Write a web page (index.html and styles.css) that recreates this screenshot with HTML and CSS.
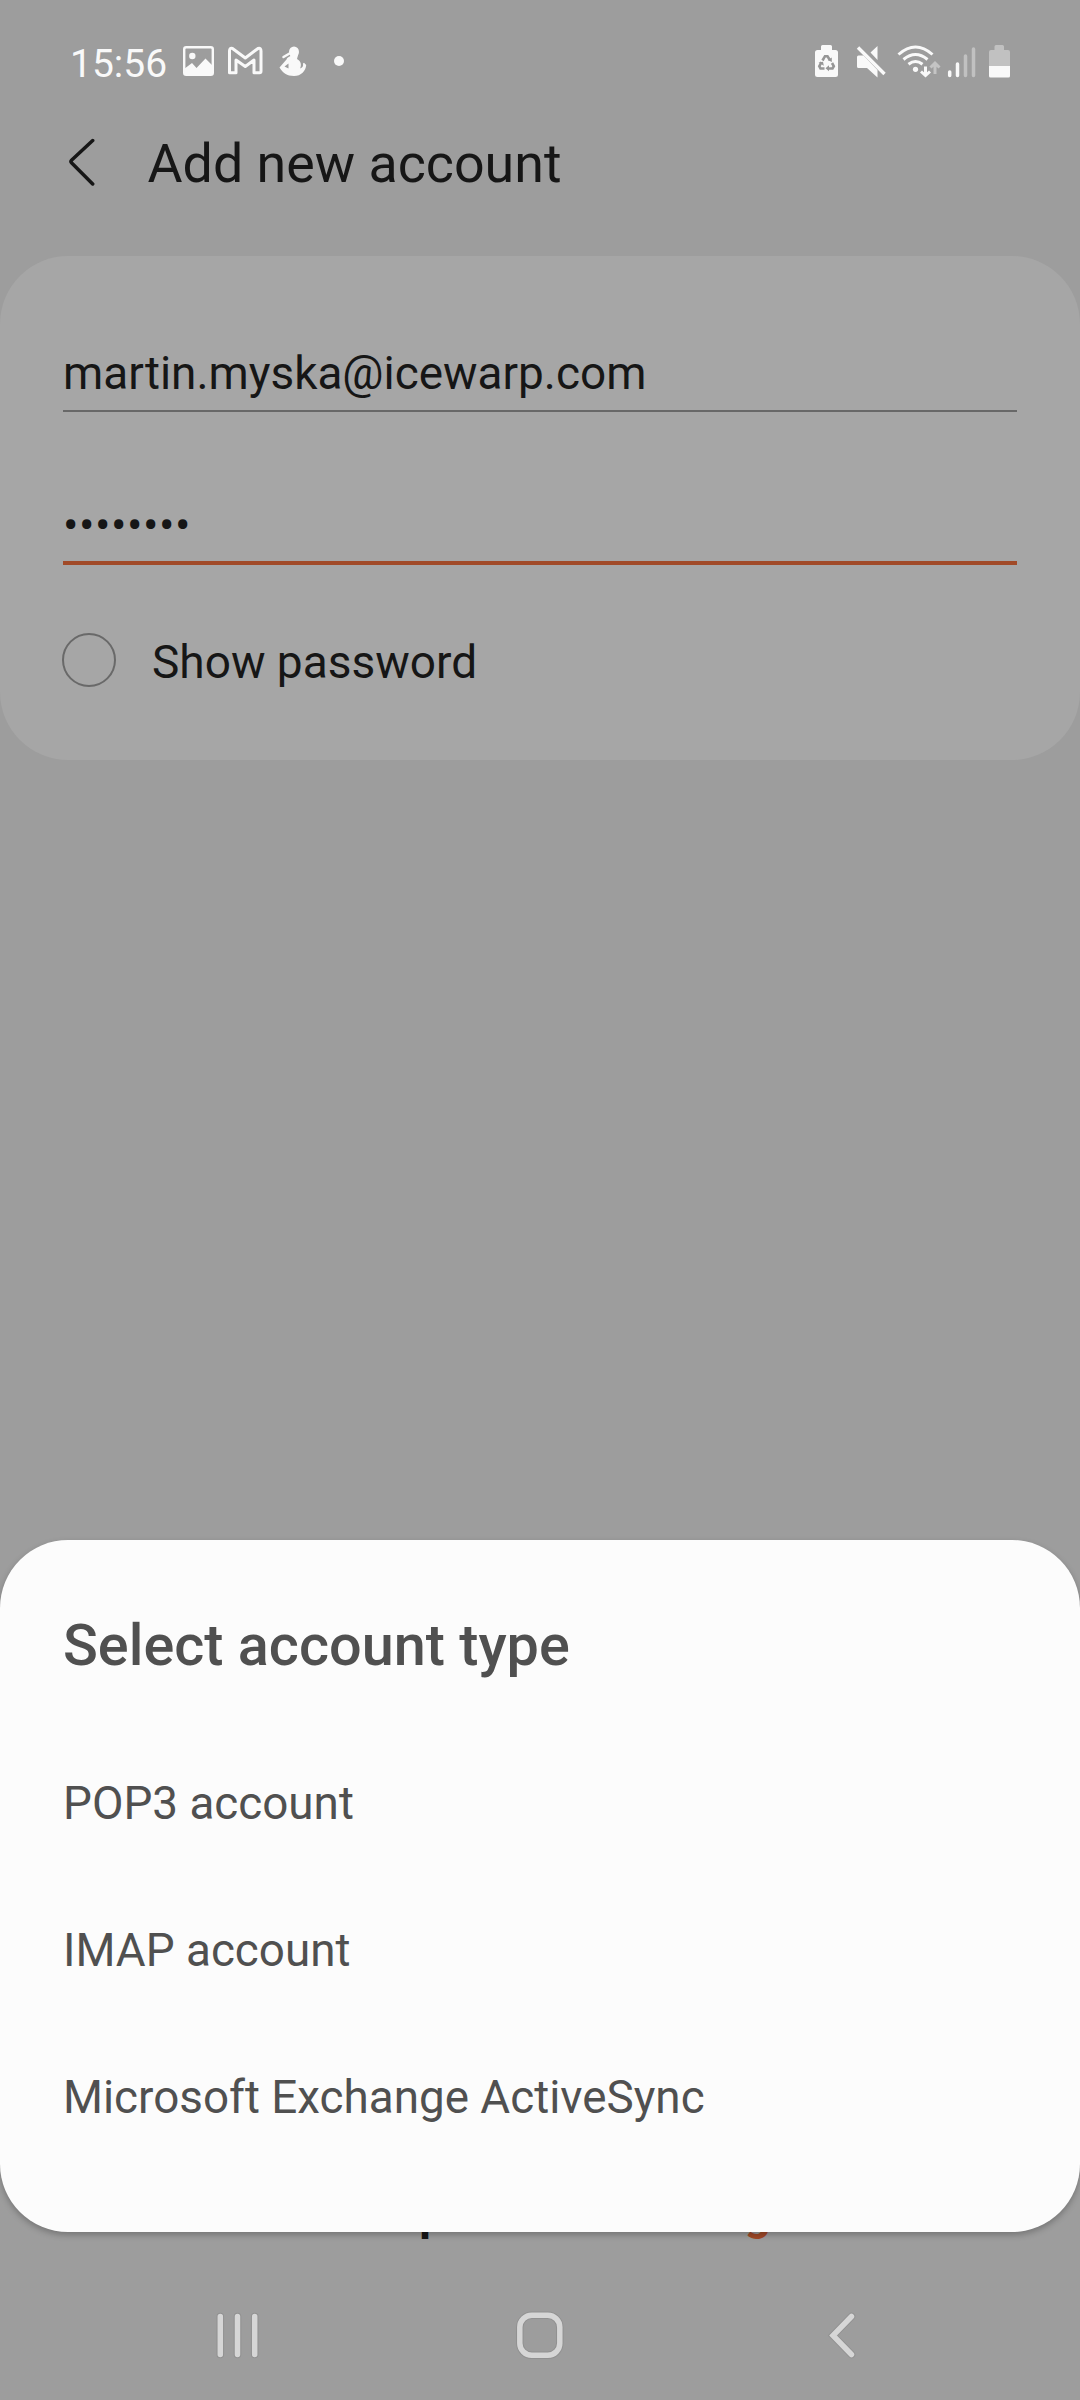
FILE: index.html
```html
<!DOCTYPE html>
<html lang="en">
<head>
<meta charset="utf-8">
<title>Add new account</title>
<link rel="stylesheet" href="styles.css">
</head>
<body>
<div class="screen">
  <div class="status">
    <div class="status-group">
      <span class="clock">15:56</span>
      <svg width="38" height="44" viewBox="183 41 38 44"><rect x="184.200" y="47.200" width="28.600" height="27.600" rx="2" fill="none" stroke="#f9f9f9" stroke-width="2.400"/><circle cx="192.300" cy="56" r="3.200" fill="#f9f9f9"/><path d="M184 69l8-6 4.500 5 9-9.500 7.500 7.500v9h-29z" fill="#f9f9f9"/></svg>
      <svg width="49" height="44" viewBox="221 41 49 44"><path d="M229.500 72.700V51q0-3.500 3-2.500l12.800 9.500L258 48.500q3-1 3 2.500v20.200q0 1.500-1.500 1.500H254V60l-8.700 6.500L236 60v12.700z" fill="none" stroke="#f9f9f9" stroke-width="3" stroke-linejoin="round"/></svg>
      <svg width="50" height="44" viewBox="270 41 50 44"><ellipse cx="294" cy="52" rx="5" ry="5.500" fill="#f9f9f9"/><path d="M290.500 55h7.500l-1 4c4.500 2 4.500 7 3 9.500 2.500-.5 3.500-2.500 3-5l1-.8 2.200 2.300c-.5 6-5 11-12.200 11-7 0-11.500-3.500-14.500-8.500l7-8c.5-2 2-2.500 4-3.500z" fill="#f9f9f9"/><path d="M284.500 66.500l4-3v5z" fill="#9d9d9d"/><path d="M283.500 57l6-3.500" stroke="#f9f9f9" stroke-width="2.500" stroke-linecap="round"/></svg>
      <svg width="24" height="44" viewBox="320 41 24 44"><circle cx="339" cy="61" r="5" fill="#f9f9f9"/></svg>
    </div>
    <div class="status-group">
      <svg width="38" height="44" viewBox="810 41 38 44"><path d="M821 50v-3.500q0-1.500 1.500-1.500h8q1.500 0 1.500 1.500V50h3.500q2.500 0 2.500 2.500v22q0 2.500-2.500 2.500h-18q-2.500 0-2.500-2.500v-22q0-2.500 2.500-2.500z" fill="#f9f9f9"/><g fill="none" stroke="#969696" stroke-width="2.600"><path d="M822.500 60.500l2.500-4.300h2.500l2.500 4M832 63l1.800 3.200-1.300 2.300H828M824.500 68.500h-4l-1.200-2.300 2.200-4"/></g><path d="M831.800 57.500v4.500l-4-2zM829 65.300v6l-3.500-3zM818.500 62.500l4.500-.8.800 4z" fill="#969696"/></svg>
      <svg width="44" height="44" viewBox="848 41 44 44"><path d="M877.500 46v14l-7-7.500zM857 57q0-1.500 1.500-1.500h5L877.500 70v7.500l-10.500-9.500h-8.500q-1.500 0-1.500-1.500z" fill="#f9f9f9"/><path d="M858 47.500L884.500 74" stroke="#f9f9f9" stroke-width="3.400"/></svg>
      <svg width="51" height="44" viewBox="892 41 51 44"><g fill="none" stroke="#f9f9f9" stroke-width="3"><path d="M898.500 54.500q17-15 34 0M903.500 59.500q12-10 24 0M908.500 64.300q7-5.500 14 0"/><path d="M925.500 66.500v8M921 71.500l4.500 4 4.500-4"/></g><circle cx="915.500" cy="69.300" r="2.600" fill="#f9f9f9"/><path d="M935 74v-9M930.500 67.500l4.500-4.500 4.500 4.500" fill="none" stroke="#c4c4c4" stroke-width="3"/></svg>
      <svg width="39" height="44" viewBox="943 41 39 44"><g stroke-width="3.500" stroke-linecap="round"><path d="M949.700 72v3.500M957.500 64v11.500" stroke="#f9f9f9"/><path d="M965.500 56v19.500M973.500 49v26.500" stroke="#c1c1c1"/></g></svg>
      <svg width="29" height="44" viewBox="982 41 29 44"><path d="M994.500 50v-3.500q0-1.500 1.500-1.500h6.500q1.500 0 1.500 1.500V50h4q2 0 2 2v14.500h-21V52q0-2 2-2z" fill="#c1c1c1"/><path d="M989 66h21v10q0 1.500-1.500 1.500h-18q-1.500 0-1.500-1.500z" fill="#f9f9f9"/></svg>
    </div>
  </div>

  <header class="header">
    <svg class="back" width="28" height="52" viewBox="67 136 28 52"><path d="M92.700 140.500L71.500 160.300q-1.300 1.200 0 2.500l21.200 21.200" fill="none" stroke="#161616" stroke-width="3.500" stroke-linecap="round"/></svg>
    <h1 class="title">Add new account</h1>
  </header>

  <main class="card">
    <div class="field">martin.myska@icewarp.com</div>
    <div class="field field-active">••••••••</div>
    <label class="check"><span class="radio"></span><span class="check-text">Show password</span></label>
  </main>

  <div class="actions"><span>Manual setup</span><span class="accent">Sign in</span></div>

  <nav class="nav">
    <svg width="60" height="60" viewBox="208 2306 60 60"><g stroke-linecap="round"><path class="halo" d="M220.300 2316.500v38M237.500 2316.500v38M254.700 2316.500v38"/><path class="glyph" d="M220.300 2316.500v38M237.500 2316.500v38M254.700 2316.500v38"/></g></svg>
    <svg width="60" height="60" viewBox="510 2306 60 60"><rect class="halo" x="519.800" y="2315.300" width="40" height="40" rx="12"/><rect class="glyph" x="519.800" y="2315.300" width="40" height="40" rx="12"/></svg>
    <svg width="60" height="60" viewBox="812 2306 60 60"><g stroke-linecap="round"><path class="halo" d="M851.500 2316.500l-18.500 19 18.500 19"/><path class="glyph" d="M851.500 2316.500l-18.500 19 18.500 19"/></g></svg>
  </nav>

  <section class="sheet">
    <h2 class="sheet-title">Select account type</h2>
    <ul class="options">
      <li>POP3 account</li>
      <li>IMAP account</li>
      <li>Microsoft Exchange ActiveSync</li>
    </ul>
  </section>
</div>
</body>
</html>
```
FILE: styles.css
```css
* { box-sizing: border-box; }
body {
  margin: 0;
  background: #9d9d9d;
  color: #161616;
  font: 400 46px Roboto, sans-serif;
}
.screen {
  position: relative;
  display: flex;
  flex-direction: column;
  width: 1080px;
  height: 2400px;
  overflow: hidden;
}
svg { display: block; flex: none; }

.status {
  display: flex;
  justify-content: space-between;
  height: 85px;
  padding: 41px 69px 0;
}
.status-group { display: flex; }
.clock {
  width: 114px;
  padding-left: 1px;
  font-size: 39px;
  line-height: 46px;
  color: #f9f9f9;
}

.header {
  display: flex;
  align-items: center;
  height: 159px;
  margin-bottom: 12px;
  padding-left: 67px;
}
.back { margin-top: -5px; }
.title {
  margin: -2px 0 0 52.5px;
  font-size: 53.75px;
  font-weight: 400;
}

.card {
  height: 504px;
  padding: 80px 63px 0;
  border-radius: 68px;
  background: #a6a6a6;
}
.field {
  border-bottom: 2px solid #686868;
  font-size: 45.9px;
  line-height: 74px;
}
.field-active {
  margin-top: 77px;
  border-bottom: 4px solid #a14a28;
  line-height: 72px;
  letter-spacing: 0.5px;
}
.check {
  display: flex;
  gap: 36px;
  height: 54px;
  margin: 68px 0 0 -1px;
}
.radio {
  width: 54px;
  height: 54px;
  border: 2.5px solid #696969;
  border-radius: 50%;
}
.check-text { line-height: 58px; }

.actions {
  display: grid;
  grid-template-columns: 470px 470px;
  justify-content: center;
  margin-top: auto;
  text-align: center;
  font-weight: 700;
  line-height: 60px;
}
.accent { color: #a14a28; }

.nav {
  display: grid;
  grid-template-columns: repeat(3, 302px);
  place-content: center;
  justify-items: center;
  height: 128px;
  margin-top: 28px;
}
.glyph, .halo { fill: none; stroke: #d6d6d6; stroke-width: 5.5px; }
.halo { stroke: #919191; stroke-width: 7.5px; }

.sheet {
  position: absolute;
  left: 0;
  right: 0;
  bottom: 168px;
  height: 692px;
  padding: 70px 63px 0;
  border-radius: 68px;
  background: #fcfcfc;
  box-shadow: 0 3px 6px rgba(0, 0, 0, 0.25);
  color: #505050;
}
.sheet-title {
  margin: 0 0 48px;
  font-size: 57.6px;
  font-weight: 500;
  line-height: 72px;
}
.options {
  margin: 0;
  padding: 0;
  list-style: none;
  font-size: 45.8px;
  line-height: 147px;
}
```
